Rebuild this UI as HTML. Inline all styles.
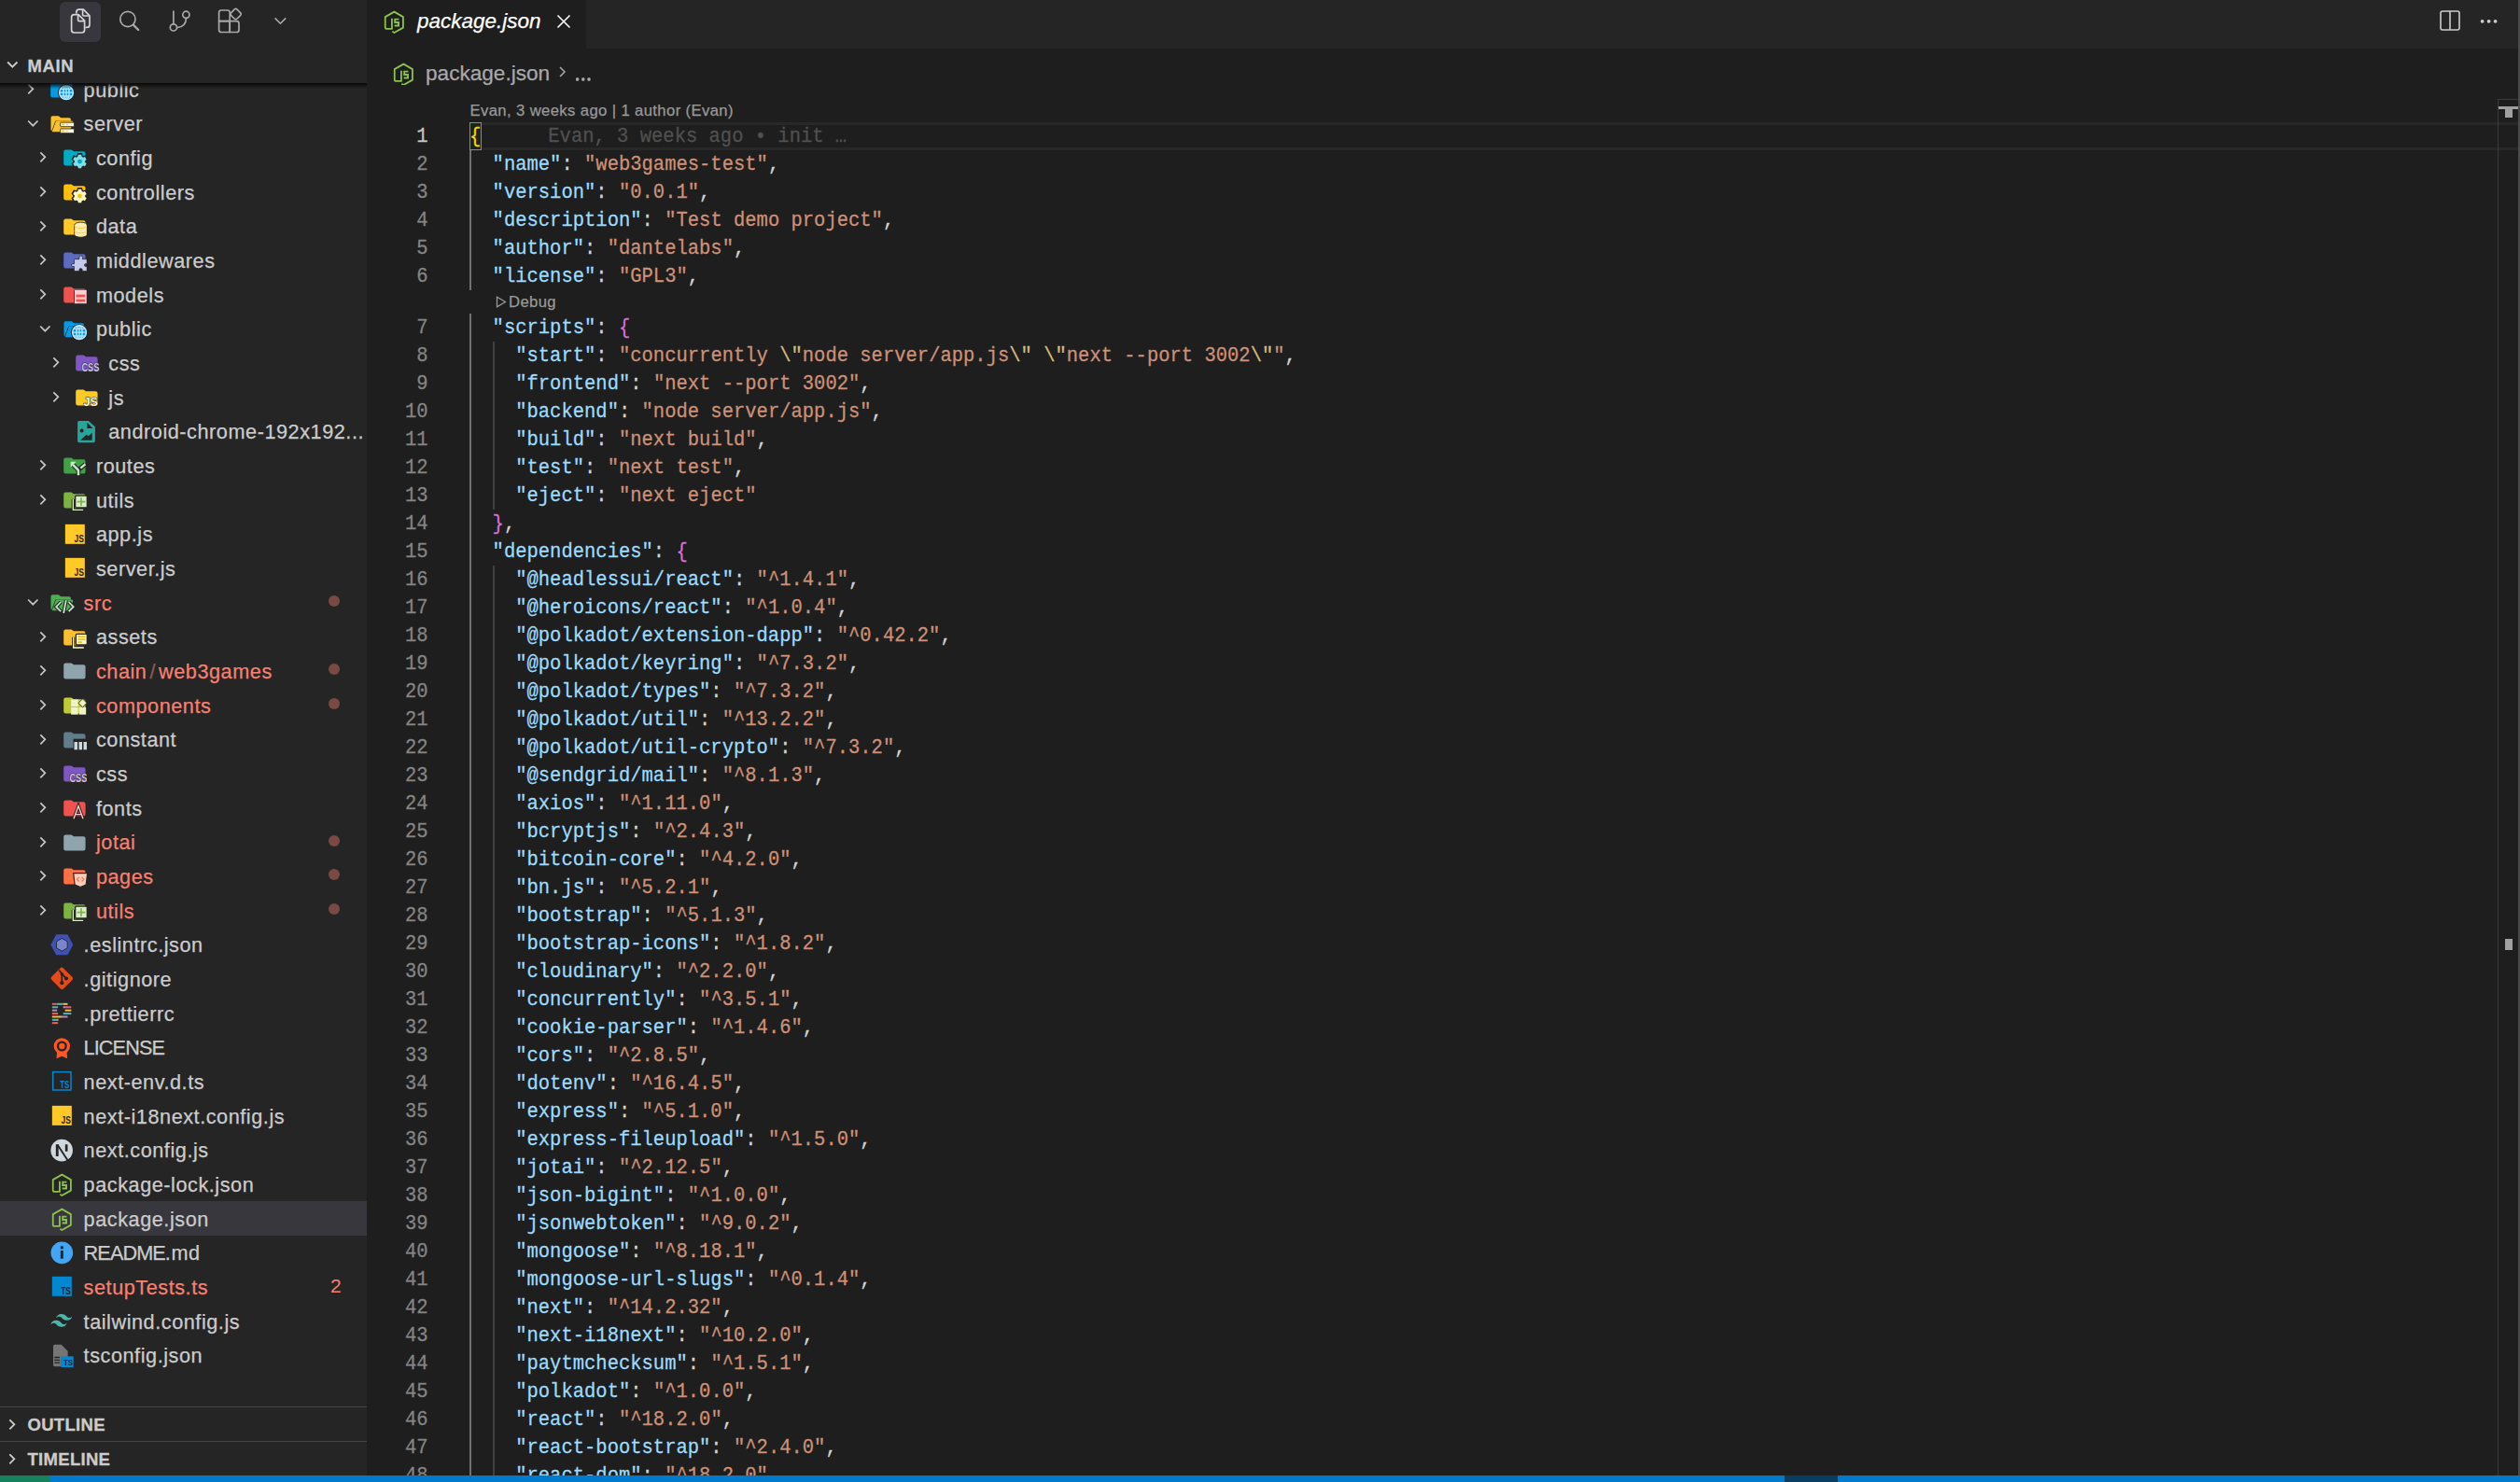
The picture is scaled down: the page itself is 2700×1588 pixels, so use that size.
<!DOCTYPE html>
<html><head><meta charset="utf-8">
<style>
*{margin:0;padding:0;box-sizing:border-box}
html,body{width:2700px;height:1588px;overflow:hidden;background:#1e1e1e;font-family:"Liberation Sans",sans-serif}
.abs{position:absolute}
#side{position:absolute;left:0;top:0;width:393px;height:1581px;background:#252526;overflow:hidden}
#act .sel{position:absolute;left:64px;top:2px;width:44px;height:43px;border-radius:6px;background:#37373d}
#act svg{position:absolute}
#hdr{position:absolute;left:0;top:52px;width:393px;height:37px}
#hdr .t{position:absolute;left:29.5px;top:-.5px;-webkit-text-stroke:.3px currentColor;line-height:37px;font-size:18.5px;font-weight:bold;color:#cccccc;letter-spacing:.6px}
#hdr svg{position:absolute;left:0;top:5px}
#tree{position:absolute;left:0;top:89px;width:393px;height:1418px;overflow:hidden}
#tree .inner{position:absolute;left:0;top:-89px;width:393px;height:1600px}
#shadow{position:absolute;left:0;top:89px;width:393px;height:6px;background:linear-gradient(#0a0a0a,rgba(0,0,0,0))}
.row{position:absolute;left:0;width:393px;height:36.67px}
.row.sel{background:#37373d}
.row .chev{position:absolute;top:5px;width:26.67px;height:26.67px}
.row .ico{position:absolute;top:5px;width:26.67px;height:26.67px}
.row svg{display:block}
.row .lbl{position:absolute;top:1.7px;line-height:36.67px;font-size:21.67px;letter-spacing:.55px;color:#cccccc;white-space:nowrap}
.row .lbl.err{color:#f88070}
.row .uc{letter-spacing:-.9px}
.row .slash{color:#8e5a52;padding:0 3px}
.row .dot{position:absolute;left:351.5px;top:11px;width:12px;height:12px;border-radius:50%;background:#794943}
.row .cnt{position:absolute;left:354px;top:0;line-height:36.67px;font-size:21px;color:#f88070}
.sect{position:absolute;left:0;width:393px;height:37px;border-top:1px solid #454545}
.sect .t{position:absolute;left:29.5px;top:1px;-webkit-text-stroke:.3px currentColor;line-height:36px;font-size:18.5px;font-weight:bold;color:#cccccc;letter-spacing:.3px}
.sect svg{position:absolute;left:0;top:5px}
#status{position:absolute;left:0;top:1581px;width:2700px;height:30px;background:#007acc}
#status .rem{position:absolute;left:0;top:0;width:53px;height:30px;background:#16825d}
#status .dk{position:absolute;left:1912px;top:0;width:57px;height:30px;background:#0a3d62}
#tabs{position:absolute;left:393px;top:0;width:2307px;height:52px;background:#252526}
#tab{position:absolute;left:0;top:0;width:235px;height:52px;background:#1e1e1e}
#tab .t{position:absolute;left:54px;top:0;line-height:46px;font-size:22.5px;font-style:italic;color:#ffffff}
#crumb .t{position:absolute;left:456px;top:60.5px;line-height:36px;font-size:22.6px;color:#a9a9a9;white-space:nowrap}
.mono{font-family:"Liberation Mono",monospace}
#code{position:absolute;left:503px;top:0;width:2170px;height:1581px;overflow:hidden}
.ln{position:absolute;left:0;height:30px;line-height:30px;transform:scaleY(1.08);transform-origin:0 12.5px;font-family:"Liberation Mono",monospace;font-size:20.5px;color:#d4d4d4;white-space:pre}
.ln,.row .lbl,.num,#tab .t,#crumb .t,.lens{-webkit-text-stroke:.25px currentColor}
.k{color:#9cdcfe}.s{color:#ce9178}.e{color:#d7ba7d}.p{color:#d4d4d4}
.b1{color:#ffd700}.b2{color:#da70d6}
.bm{outline:1px solid #888888;outline-offset:-1px;background:rgba(0,100,0,.1)}
.blame{color:#505050;padding-left:72px}
#nums{position:absolute;left:398.5px;top:0;width:60px;height:1581px;overflow:hidden}
.num{position:absolute;right:0;height:30px;line-height:30px;transform:scaleY(1.1);transform-origin:0 12px;font-family:"Liberation Mono",monospace;font-size:20.5px;color:#858585;text-align:right;width:60px}
.num.act{color:#c6c6c6}
.lens{position:absolute;left:503.5px;height:25px;line-height:25px;font-size:16.67px;letter-spacing:.38px;color:#999999;white-space:nowrap}
.guide{position:absolute;width:2px}
</style></head>
<body>
<div id="side">
  <div id="act">
    <div class="sel"></div>
    <svg style="left:0;top:0" width="393" height="52" viewBox="0 0 393 52" fill="none" stroke-linejoin="round">
      <g stroke="#d4d4d4" stroke-width="1.7">
        <path d="M81.8 14.6V13.2q0-3 3-3h4.6l6.6 6.6v9.6q0 3-3 3h-1.6"/>
        <path d="M88.6 10.2v5.4q0 1.4 1.4 1.4h5.2"/>
        <path d="M76.6 18.6q0-3 3-3h4.4l6.6 6.6v9.8q0 3-3 3h-8q-3 0-3-3z"/>
        <path d="M83.6 15.6v5.6q0 1.4 1.4 1.4h5.4"/>
      </g>
      <g stroke="#a8a8a8" stroke-width="1.7">
        <circle cx="136.9" cy="20.5" r="8.1"/>
        <path d="M142.8 26.6l5.4 5.4" stroke-width="2.4" stroke-linecap="round"/>
        <path d="M185.9 11.6v14"/>
        <circle cx="185.9" cy="29.4" r="3.6"/>
        <circle cx="199.4" cy="15.8" r="3.6"/>
        <path d="M199.4 19.4q0 9.2-9.8 10.2"/>
        <path d="M237 11h6.6q2.6 0 2.6 2.6V22.6H234.6V13.6q0-2.6 2.4-2.6z"/>
        <path d="M234.6 22.6h11.6v11.9h-9q-2.6 0-2.6-2.6z"/>
        <path d="M246.2 22.6h7.2q2.6 0 2.6 2.6v6.7q0 2.6-2.6 2.6h-7.2z"/>
        <path d="M251.1 10.2q1.5-1.5 3 0l3.4 3.4q1.5 1.5 0 3l-3.4 3.4q-1.5 1.5-3 0l-3.4-3.4q-1.5-1.5 0-3z"/>
        <path d="M294.6 19.4l5.8 5.8 5.8-5.8" stroke-width="1.6"/>
      </g>
    </svg>
  </div>
  <div id="hdr">
    <svg width="26.67" height="26.67" viewBox="0 0 16 16" style="left:0;top:3.7px"><path d="M4.9 6.3L8 9.4 11.1 6.3" fill="none" stroke="#cccccc" stroke-width="1.1"/></svg>
    <div class="t">MAIN</div>
  </div>
  <div id="tree"><div class="inner">
<div class="row" style="top:77.10px"><span class="chev" style="left:20.00px"><svg viewBox="0 0 16 16" width="26.67" height="26.67"><path d="M6.2 5L9.2 8 6.2 11" fill="none" stroke="#c5c5c5" stroke-width="1.05"/></svg></span><span class="ico" style="left:53.30px"><svg viewBox="0 0 16 16" width="26.67" height="26.67"><path fill="#039be5" d="M2 3.25H5.5Q5.9 3.25 6.2 3.55L6.9 4.15Q7.2 4.4 7.6 4.4H13.4Q14.75 4.4 14.75 5.75V12.1Q14.75 13.45 13.4 13.45H2.05Q0.72 13.45 0.72 12.1V4.6Q0.72 3.25 2 3.25Z"/><circle cx="10.8" cy="10.3" r="5.4" fill="#252526"/><circle cx="10.8" cy="10.3" r="4.5" fill="#b3e5fc" opacity=".0"/><circle cx="10.8" cy="10.3" r="4.4" fill="#039be5" stroke="#b3e5fc" stroke-width="1"/><ellipse cx="10.8" cy="10.3" rx="1.9" ry="4.4" fill="none" stroke="#b3e5fc" stroke-width=".9"/><path d="M6.4 10.3h8.8M7 8h7.6M7 12.6h7.6M10.8 5.9v8.8" stroke="#b3e5fc" stroke-width=".8"/></svg></span><span class="lbl" style="left:89.60px">public</span></div>
<div class="row" style="top:113.77px"><span class="chev" style="left:21.80px"><svg viewBox="0 0 16 16" width="26.67" height="26.67"><path d="M4.9 6.3L8 9.4 11.1 6.3" fill="none" stroke="#c5c5c5" stroke-width="1.05"/></svg></span><span class="ico" style="left:53.30px"><svg viewBox="0 0 16 16" width="26.67" height="26.67"><path fill="#fbc02d" d="M2 3.1H5.6Q6 3.1 6.3 3.4L6.9 4Q7.2 4.3 7.6 4.3H12.6Q13.8 4.3 13.8 5.5V6.2H4.6Q3.9 6.2 3.6 6.9L1.4 12.8Q1.1 12.6 0.9 12.2V4.4Q0.9 3.1 2 3.1ZM4.9 6.3H14.2Q15.4 6.3 15.1 7.4L13.3 12.6Q13 13.4 12.1 13.4H1.6L4 6.9Q4.2 6.3 4.9 6.3Z"/><rect x="7" y="7.3" width="8.9" height="2.7" rx=".4" fill="#fffde7" stroke="#252526" stroke-width=".5"/><rect x="7" y="11.4" width="8.9" height="2.8" rx=".4" fill="#fffde7" stroke="#252526" stroke-width=".5"/><path d="M8.2 8.65h1.2M11.3 8.65h.1M8.2 12.8h1.2M11.3 12.8h.1" stroke="#fbc02d" stroke-width="1" stroke-linecap="round"/></svg></span><span class="lbl" style="left:89.60px">server</span></div>
<div class="row" style="top:150.43px"><span class="chev" style="left:33.33px"><svg viewBox="0 0 16 16" width="26.67" height="26.67"><path d="M6.2 5L9.2 8 6.2 11" fill="none" stroke="#c5c5c5" stroke-width="1.05"/></svg></span><span class="ico" style="left:66.63px"><svg viewBox="0 0 16 16" width="26.67" height="26.67"><path fill="#00acc1" d="M2 3.25H5.5Q5.9 3.25 6.2 3.55L6.9 4.15Q7.2 4.4 7.6 4.4H13.4Q14.75 4.4 14.75 5.75V12.1Q14.75 13.45 13.4 13.45H2.05Q0.72 13.45 0.72 12.1V4.6Q0.72 3.25 2 3.25Z"/><path d="M9.69 7.11L9.94 5.88L12.26 5.88L12.51 7.11L13.64 7.76L14.82 7.36L15.98 9.38L15.05 10.20L15.05 11.50L15.98 12.32L14.82 14.34L13.64 13.94L12.51 14.59L12.26 15.82L9.94 15.82L9.69 14.59L8.56 13.94L7.38 14.34L6.22 12.32L7.15 11.50L7.15 10.20L6.22 9.38L7.38 7.36L8.56 7.76Z" fill="#252526" stroke="#252526" stroke-width=".9"/><path d="M9.88 7.62L10.07 6.47L12.13 6.47L12.32 7.62L13.29 8.18L14.38 7.77L15.41 9.55L14.50 10.29L14.50 11.41L15.41 12.15L14.38 13.93L13.29 13.52L12.32 14.08L12.13 15.23L10.07 15.23L9.88 14.08L8.91 13.52L7.82 13.93L6.79 12.15L7.70 11.41L7.70 10.29L6.79 9.55L7.82 7.77L8.91 8.18Z" fill="#80deea"/><circle cx="11.1" cy="10.85" r="1.45" fill="#00acc1"/></svg></span><span class="lbl" style="left:102.93px">config</span></div>
<div class="row" style="top:187.10px"><span class="chev" style="left:33.33px"><svg viewBox="0 0 16 16" width="26.67" height="26.67"><path d="M6.2 5L9.2 8 6.2 11" fill="none" stroke="#c5c5c5" stroke-width="1.05"/></svg></span><span class="ico" style="left:66.63px"><svg viewBox="0 0 16 16" width="26.67" height="26.67"><path fill="#ffc107" d="M2 3.25H5.5Q5.9 3.25 6.2 3.55L6.9 4.15Q7.2 4.4 7.6 4.4H13.4Q14.75 4.4 14.75 5.75V12.1Q14.75 13.45 13.4 13.45H2.05Q0.72 13.45 0.72 12.1V4.6Q0.72 3.25 2 3.25Z"/><path d="M9.69 7.11L9.94 5.88L12.26 5.88L12.51 7.11L13.64 7.76L14.82 7.36L15.98 9.38L15.05 10.20L15.05 11.50L15.98 12.32L14.82 14.34L13.64 13.94L12.51 14.59L12.26 15.82L9.94 15.82L9.69 14.59L8.56 13.94L7.38 14.34L6.22 12.32L7.15 11.50L7.15 10.20L6.22 9.38L7.38 7.36L8.56 7.76Z" fill="#252526" stroke="#252526" stroke-width=".9"/><path d="M9.88 7.62L10.07 6.47L12.13 6.47L12.32 7.62L13.29 8.18L14.38 7.77L15.41 9.55L14.50 10.29L14.50 11.41L15.41 12.15L14.38 13.93L13.29 13.52L12.32 14.08L12.13 15.23L10.07 15.23L9.88 14.08L8.91 13.52L7.82 13.93L6.79 12.15L7.70 11.41L7.70 10.29L6.79 9.55L7.82 7.77L8.91 8.18Z" fill="#fff9c4"/><circle cx="11.1" cy="10.85" r="1.45" fill="#ffc107"/></svg></span><span class="lbl" style="left:102.93px">controllers</span></div>
<div class="row" style="top:223.77px"><span class="chev" style="left:33.33px"><svg viewBox="0 0 16 16" width="26.67" height="26.67"><path d="M6.2 5L9.2 8 6.2 11" fill="none" stroke="#c5c5c5" stroke-width="1.05"/></svg></span><span class="ico" style="left:66.63px"><svg viewBox="0 0 16 16" width="26.67" height="26.67"><path fill="#ffca28" d="M2 3.25H5.5Q5.9 3.25 6.2 3.55L6.9 4.15Q7.2 4.4 7.6 4.4H13.4Q14.75 4.4 14.75 5.75V12.1Q14.75 13.45 13.4 13.45H2.05Q0.72 13.45 0.72 12.1V4.6Q0.72 3.25 2 3.25Z"/><path d="M7.6 7.3A4.1 1.8 0 0 1 15.8 7.3V13.33A4.1 1.8 0 0 1 7.6 13.33Z" fill="#ffecb3" stroke="#252526" stroke-width=".5"/><path d="M7.6 7.5A4.1 1.8 0 0 0 15.8 7.5M7.6 10.7A4.1 1.8 0 0 0 15.8 10.7" fill="none" stroke="#ffca28" stroke-width=".55"/></svg></span><span class="lbl" style="left:102.93px">data</span></div>
<div class="row" style="top:260.44px"><span class="chev" style="left:33.33px"><svg viewBox="0 0 16 16" width="26.67" height="26.67"><path d="M6.2 5L9.2 8 6.2 11" fill="none" stroke="#c5c5c5" stroke-width="1.05"/></svg></span><span class="ico" style="left:66.63px"><svg viewBox="0 0 16 16" width="26.67" height="26.67"><path fill="#5c6bc0" d="M2 3.25H5.5Q5.9 3.25 6.2 3.55L6.9 4.15Q7.2 4.4 7.6 4.4H13.4Q14.75 4.4 14.75 5.75V12.1Q14.75 13.45 13.4 13.45H2.05Q0.72 13.45 0.72 12.1V4.6Q0.72 3.25 2 3.25Z"/><path d="M7.97 7.6H10.76V6.35A1.05 1.05 0 0 1 12.85 6.35V7.6H15.23Q15.73 7.6 15.73 8.1V10.6H14.9A.85 .85 0 0 0 14.9 12.3H15.73V14.77Q15.73 15.27 15.23 15.27H12.7V14.55A.97 .97 0 0 0 10.76 14.55V15.27H7.97Q7.47 15.27 7.47 14.77V12.3H6.55A.85 .85 0 0 1 6.55 10.6H7.47V8.1Q7.47 7.6 7.97 7.6Z" fill="#c5cae9" stroke="#252526" stroke-width=".45"/></svg></span><span class="lbl" style="left:102.93px">middlewares</span></div>
<div class="row" style="top:297.10px"><span class="chev" style="left:33.33px"><svg viewBox="0 0 16 16" width="26.67" height="26.67"><path d="M6.2 5L9.2 8 6.2 11" fill="none" stroke="#c5c5c5" stroke-width="1.05"/></svg></span><span class="ico" style="left:66.63px"><svg viewBox="0 0 16 16" width="26.67" height="26.67"><path fill="#ef5350" d="M2 3.25H5.5Q5.9 3.25 6.2 3.55L6.9 4.15Q7.2 4.4 7.6 4.4H13.4Q14.75 4.4 14.75 5.75V12.1Q14.75 13.45 13.4 13.45H2.05Q0.72 13.45 0.72 12.1V4.6Q0.72 3.25 2 3.25Z"/><rect x="7.5" y="4.9" width="8.2" height="9.3" rx=".7" fill="#ffcdd2" stroke="#252526" stroke-width=".5"/><rect x="8.7" y="8.2" width="5.8" height="1.7" fill="#ef5350"/><rect x="8.7" y="11.2" width="5.8" height="1.6" fill="#ef5350"/></svg></span><span class="lbl" style="left:102.93px">models</span></div>
<div class="row" style="top:333.77px"><span class="chev" style="left:35.13px"><svg viewBox="0 0 16 16" width="26.67" height="26.67"><path d="M4.9 6.3L8 9.4 11.1 6.3" fill="none" stroke="#c5c5c5" stroke-width="1.05"/></svg></span><span class="ico" style="left:66.63px"><svg viewBox="0 0 16 16" width="26.67" height="26.67"><path fill="#039be5" d="M2 3.1H5.6Q6 3.1 6.3 3.4L6.9 4Q7.2 4.3 7.6 4.3H12.6Q13.8 4.3 13.8 5.5V6.2H4.6Q3.9 6.2 3.6 6.9L1.4 12.8Q1.1 12.6 0.9 12.2V4.4Q0.9 3.1 2 3.1ZM4.9 6.3H14.2Q15.4 6.3 15.1 7.4L13.3 12.6Q13 13.4 12.1 13.4H1.6L4 6.9Q4.2 6.3 4.9 6.3Z"/><circle cx="10.8" cy="10.3" r="5.4" fill="#252526"/><circle cx="10.8" cy="10.3" r="4.5" fill="#b3e5fc" opacity=".0"/><circle cx="10.8" cy="10.3" r="4.4" fill="#039be5" stroke="#b3e5fc" stroke-width="1"/><ellipse cx="10.8" cy="10.3" rx="1.9" ry="4.4" fill="none" stroke="#b3e5fc" stroke-width=".9"/><path d="M6.4 10.3h8.8M7 8h7.6M7 12.6h7.6M10.8 5.9v8.8" stroke="#b3e5fc" stroke-width=".8"/></svg></span><span class="lbl" style="left:102.93px">public</span></div>
<div class="row" style="top:370.44px"><span class="chev" style="left:46.67px"><svg viewBox="0 0 16 16" width="26.67" height="26.67"><path d="M6.2 5L9.2 8 6.2 11" fill="none" stroke="#c5c5c5" stroke-width="1.05"/></svg></span><span class="ico" style="left:79.97px"><svg viewBox="0 0 16 16" width="26.67" height="26.67"><path fill="#7e57c2" d="M2 3.25H5.5Q5.9 3.25 6.2 3.55L6.9 4.15Q7.2 4.4 7.6 4.4H13.4Q14.75 4.4 14.75 5.75V12.1Q14.75 13.45 13.4 13.45H2.05Q0.72 13.45 0.72 12.1V4.6Q0.72 3.25 2 3.25Z"/><text x="15.8" y="14.1" text-anchor="end" font-family="Liberation Sans" font-weight="bold" font-size="7.6" fill="#d1c4e9" stroke="#252526" stroke-width=".7" paint-order="stroke" textLength="11.3" lengthAdjust="spacingAndGlyphs">CSS</text></svg></span><span class="lbl" style="left:116.27px">css</span></div>
<div class="row" style="top:407.10px"><span class="chev" style="left:46.67px"><svg viewBox="0 0 16 16" width="26.67" height="26.67"><path d="M6.2 5L9.2 8 6.2 11" fill="none" stroke="#c5c5c5" stroke-width="1.05"/></svg></span><span class="ico" style="left:79.97px"><svg viewBox="0 0 16 16" width="26.67" height="26.67"><path fill="#ffca28" d="M2 3.25H5.5Q5.9 3.25 6.2 3.55L6.9 4.15Q7.2 4.4 7.6 4.4H13.4Q14.75 4.4 14.75 5.75V12.1Q14.75 13.45 13.4 13.45H2.05Q0.72 13.45 0.72 12.1V4.6Q0.72 3.25 2 3.25Z"/><text x="14.9" y="14.0" text-anchor="end" font-family="Liberation Sans" font-weight="bold" font-size="8.2" fill="#fff8e1" stroke="#252526" stroke-width=".7" paint-order="stroke" textLength="9.2" lengthAdjust="spacingAndGlyphs">JS</text></svg></span><span class="lbl" style="left:116.27px">js</span></div>
<div class="row" style="top:443.77px"><span class="ico" style="left:79.97px"><svg viewBox="0 0 16 16" width="26.67" height="26.67"><path fill="#26a69a" d="M2.9 1.24H8.94L13.14 4.94V14.1Q13.14 15.14 12.1 15.14H2.9Q1.86 15.14 1.86 14.1V2.28Q1.86 1.24 2.9 1.24Z"/><path fill="#252526" d="M8.04 2.3V6H11.64Z"/><circle cx="4.56" cy="7.5" r="1.2" fill="#252526"/><path fill="#252526" d="M3.72 13.64L7.5 10.04L8.82 10.94L11.22 8.84V13.64Z"/></svg></span><span class="lbl" style="left:116.27px">android-chrome-192x192...</span></div>
<div class="row" style="top:480.44px"><span class="chev" style="left:33.33px"><svg viewBox="0 0 16 16" width="26.67" height="26.67"><path d="M6.2 5L9.2 8 6.2 11" fill="none" stroke="#c5c5c5" stroke-width="1.05"/></svg></span><span class="ico" style="left:66.63px"><svg viewBox="0 0 16 16" width="26.67" height="26.67"><path fill="#43a047" d="M2 3.25H5.5Q5.9 3.25 6.2 3.55L6.9 4.15Q7.2 4.4 7.6 4.4H13.4Q14.75 4.4 14.75 5.75V12.1Q14.75 13.45 13.4 13.45H2.05Q0.72 13.45 0.72 12.1V4.6Q0.72 3.25 2 3.25Z"/><path d="M10.2 14.6v-2.6q0-.7-.5-1.2L6.6 7.7M10.9 10.6l3.6-3" stroke="#252526" stroke-width="2.8" fill="none"/><path d="M10.2 14.6v-2.6q0-.7-.5-1.2L6.6 7.7M11.6 10l3-2.6" stroke="#c8e6c9" stroke-width="1.5" fill="none"/><path d="M5.2 5.9h3.6L5.2 9.5z" fill="#c8e6c9"/></svg></span><span class="lbl" style="left:102.93px">routes</span></div>
<div class="row" style="top:517.10px"><span class="chev" style="left:33.33px"><svg viewBox="0 0 16 16" width="26.67" height="26.67"><path d="M6.2 5L9.2 8 6.2 11" fill="none" stroke="#c5c5c5" stroke-width="1.05"/></svg></span><span class="ico" style="left:66.63px"><svg viewBox="0 0 16 16" width="26.67" height="26.67"><path fill="#7cb342" d="M2 3.25H5.5Q5.9 3.25 6.2 3.55L6.9 4.15Q7.2 4.4 7.6 4.4H13.4Q14.75 4.4 14.75 5.75V12.1Q14.75 13.45 13.4 13.45H2.05Q0.72 13.45 0.72 12.1V4.6Q0.72 3.25 2 3.25Z"/><path d="M6.8 7.6v7h6.5" stroke="#252526" stroke-width="2" fill="none"/><path d="M6.8 7.6v7h6.5" stroke="#dcedc8" stroke-width=".8" fill="none"/><rect x="8.2" y="5.5" width="7.6" height="7.7" rx=".7" fill="#dcedc8" stroke="#252526" stroke-width=".8"/><path d="M12 6.7v5.3M9.4 9.35h5.2" stroke="#7cb342" stroke-width="1"/></svg></span><span class="lbl" style="left:102.93px">utils</span></div>
<div class="row" style="top:553.77px"><span class="ico" style="left:66.63px"><svg viewBox="0 0 16 16" width="26.67" height="26.67"><rect x="1.7" y="1.7" width="12.6" height="12.6" fill="#ffca28"/><text x="13.7" y="13.5" text-anchor="end" font-family="Liberation Sans" font-weight="bold" font-size="6.6" fill="#1e1e1e" textLength="6.2" lengthAdjust="spacingAndGlyphs">JS</text></svg></span><span class="lbl" style="left:102.93px">app.js</span></div>
<div class="row" style="top:590.44px"><span class="ico" style="left:66.63px"><svg viewBox="0 0 16 16" width="26.67" height="26.67"><rect x="1.7" y="1.7" width="12.6" height="12.6" fill="#ffca28"/><text x="13.7" y="13.5" text-anchor="end" font-family="Liberation Sans" font-weight="bold" font-size="6.6" fill="#1e1e1e" textLength="6.2" lengthAdjust="spacingAndGlyphs">JS</text></svg></span><span class="lbl" style="left:102.93px">server.js</span></div>
<div class="row" style="top:627.11px"><span class="chev" style="left:21.80px"><svg viewBox="0 0 16 16" width="26.67" height="26.67"><path d="M4.9 6.3L8 9.4 11.1 6.3" fill="none" stroke="#c5c5c5" stroke-width="1.05"/></svg></span><span class="ico" style="left:53.30px"><svg viewBox="0 0 16 16" width="26.67" height="26.67"><path fill="#4caf50" d="M2 3.1H5.6Q6 3.1 6.3 3.4L6.9 4Q7.2 4.3 7.6 4.3H12.6Q13.8 4.3 13.8 5.5V6.2H4.6Q3.9 6.2 3.6 6.9L1.4 12.8Q1.1 12.6 0.9 12.2V4.4Q0.9 3.1 2 3.1ZM4.9 6.3H14.2Q15.4 6.3 15.1 7.4L13.3 12.6Q13 13.4 12.1 13.4H1.6L4 6.9Q4.2 6.3 4.9 6.3Z"/><path d="M7.3 7.9L4.3 10.9 7.3 13.9M12.4 7.9L15.4 10.9 12.4 13.9M10.7 6.7L9.1 15" stroke="#252526" stroke-width="2.4" fill="none"/><path d="M7.3 7.9L4.3 10.9 7.3 13.9M12.4 7.9L15.4 10.9 12.4 13.9M10.7 6.7L9.1 15" stroke="#c8e6c9" stroke-width="1.05" fill="none"/></svg></span><span class="lbl err" style="left:89.60px">src</span><span class="dot"></span></div>
<div class="row" style="top:663.77px"><span class="chev" style="left:33.33px"><svg viewBox="0 0 16 16" width="26.67" height="26.67"><path d="M6.2 5L9.2 8 6.2 11" fill="none" stroke="#c5c5c5" stroke-width="1.05"/></svg></span><span class="ico" style="left:66.63px"><svg viewBox="0 0 16 16" width="26.67" height="26.67"><path fill="#fbc02d" d="M2 3.25H5.5Q5.9 3.25 6.2 3.55L6.9 4.15Q7.2 4.4 7.6 4.4H13.4Q14.75 4.4 14.75 5.75V12.1Q14.75 13.45 13.4 13.45H2.05Q0.72 13.45 0.72 12.1V4.6Q0.72 3.25 2 3.25Z"/><path d="M7 8.3v6.7h6.7" stroke="#252526" stroke-width="2" fill="none"/><path d="M7 8.3v6.7h6.7" stroke="#fff9c4" stroke-width=".8" fill="none"/><rect x="8.6" y="6.2" width="7.2" height="7" rx=".7" fill="#fff9c4" stroke="#252526" stroke-width=".8"/><path d="M9.8 7.9h4.8M9.8 9.7h4.8M9.8 11.5h2.8" stroke="#fbc02d" stroke-width="1"/></svg></span><span class="lbl" style="left:102.93px">assets</span></div>
<div class="row" style="top:700.44px"><span class="chev" style="left:33.33px"><svg viewBox="0 0 16 16" width="26.67" height="26.67"><path d="M6.2 5L9.2 8 6.2 11" fill="none" stroke="#c5c5c5" stroke-width="1.05"/></svg></span><span class="ico" style="left:66.63px"><svg viewBox="0 0 16 16" width="26.67" height="26.67"><path fill="#90a4ae" d="M2 3.25H5.5Q5.9 3.25 6.2 3.55L6.9 4.15Q7.2 4.4 7.6 4.4H13.4Q14.75 4.4 14.75 5.75V12.1Q14.75 13.45 13.4 13.45H2.05Q0.72 13.45 0.72 12.1V4.6Q0.72 3.25 2 3.25Z"/></svg></span><span class="lbl err" style="left:102.93px">chain<span class="slash">/</span>web3games</span><span class="dot"></span></div>
<div class="row" style="top:737.11px"><span class="chev" style="left:33.33px"><svg viewBox="0 0 16 16" width="26.67" height="26.67"><path d="M6.2 5L9.2 8 6.2 11" fill="none" stroke="#c5c5c5" stroke-width="1.05"/></svg></span><span class="ico" style="left:66.63px"><svg viewBox="0 0 16 16" width="26.67" height="26.67"><path fill="#c0ca33" d="M2 3.25H5.5Q5.9 3.25 6.2 3.55L6.9 4.15Q7.2 4.4 7.6 4.4H13.4Q14.75 4.4 14.75 5.75V12.1Q14.75 13.45 13.4 13.45H2.05Q0.72 13.45 0.72 12.1V4.6Q0.72 3.25 2 3.25Z"/><rect x="5.5" y="4.5" width="4.5" height="4.5" fill="#f0f4c3"/><rect x="5.5" y="9.6" width="4.5" height="4.6" fill="#f0f4c3"/><rect x="10.6" y="9.6" width="4.5" height="4.6" fill="#f0f4c3"/><path d="M12.9 4.1l2.7 2.7-2.7 2.7-2.7-2.7z" fill="#f0f4c3" stroke="#252526" stroke-width=".5"/></svg></span><span class="lbl err" style="left:102.93px">components</span><span class="dot"></span></div>
<div class="row" style="top:773.77px"><span class="chev" style="left:33.33px"><svg viewBox="0 0 16 16" width="26.67" height="26.67"><path d="M6.2 5L9.2 8 6.2 11" fill="none" stroke="#c5c5c5" stroke-width="1.05"/></svg></span><span class="ico" style="left:66.63px"><svg viewBox="0 0 16 16" width="26.67" height="26.67"><path fill="#607d8b" d="M2 3.25H5.5Q5.9 3.25 6.2 3.55L6.9 4.15Q7.2 4.4 7.6 4.4H13.4Q14.75 4.4 14.75 5.75V12.1Q14.75 13.45 13.4 13.45H2.05Q0.72 13.45 0.72 12.1V4.6Q0.72 3.25 2 3.25Z"/><rect x="6.9" y="7.6" width="9.2" height="7.6" fill="#252526"/><rect x="7.5" y="9.6" width="2.1" height="5" fill="#cfd8dc"/><rect x="10.5" y="9.6" width="2.1" height="5" fill="#cfd8dc"/><rect x="13.5" y="9.6" width="2.1" height="5" fill="#cfd8dc"/></svg></span><span class="lbl" style="left:102.93px">constant</span></div>
<div class="row" style="top:810.44px"><span class="chev" style="left:33.33px"><svg viewBox="0 0 16 16" width="26.67" height="26.67"><path d="M6.2 5L9.2 8 6.2 11" fill="none" stroke="#c5c5c5" stroke-width="1.05"/></svg></span><span class="ico" style="left:66.63px"><svg viewBox="0 0 16 16" width="26.67" height="26.67"><path fill="#7e57c2" d="M2 3.25H5.5Q5.9 3.25 6.2 3.55L6.9 4.15Q7.2 4.4 7.6 4.4H13.4Q14.75 4.4 14.75 5.75V12.1Q14.75 13.45 13.4 13.45H2.05Q0.72 13.45 0.72 12.1V4.6Q0.72 3.25 2 3.25Z"/><text x="15.8" y="14.1" text-anchor="end" font-family="Liberation Sans" font-weight="bold" font-size="7.6" fill="#d1c4e9" stroke="#252526" stroke-width=".7" paint-order="stroke" textLength="11.3" lengthAdjust="spacingAndGlyphs">CSS</text></svg></span><span class="lbl" style="left:102.93px">css</span></div>
<div class="row" style="top:847.11px"><span class="chev" style="left:33.33px"><svg viewBox="0 0 16 16" width="26.67" height="26.67"><path d="M6.2 5L9.2 8 6.2 11" fill="none" stroke="#c5c5c5" stroke-width="1.05"/></svg></span><span class="ico" style="left:66.63px"><svg viewBox="0 0 16 16" width="26.67" height="26.67"><path fill="#ef5350" d="M2 3.25H5.5Q5.9 3.25 6.2 3.55L6.9 4.15Q7.2 4.4 7.6 4.4H13.4Q14.75 4.4 14.75 5.75V12.1Q14.75 13.45 13.4 13.45H2.05Q0.72 13.45 0.72 12.1V4.6Q0.72 3.25 2 3.25Z"/><path d="M7.2 15.2l3-8.2 3 8.2M8.3 12.4h3.8" stroke="#252526" stroke-width="2" fill="none"/><path d="M7.2 15.2l3-8.2 3 8.2M8.3 12.4h3.8" stroke="#ffcdd2" stroke-width=".8" fill="none"/></svg></span><span class="lbl" style="left:102.93px">fonts</span></div>
<div class="row" style="top:883.77px"><span class="chev" style="left:33.33px"><svg viewBox="0 0 16 16" width="26.67" height="26.67"><path d="M6.2 5L9.2 8 6.2 11" fill="none" stroke="#c5c5c5" stroke-width="1.05"/></svg></span><span class="ico" style="left:66.63px"><svg viewBox="0 0 16 16" width="26.67" height="26.67"><path fill="#90a4ae" d="M2 3.25H5.5Q5.9 3.25 6.2 3.55L6.9 4.15Q7.2 4.4 7.6 4.4H13.4Q14.75 4.4 14.75 5.75V12.1Q14.75 13.45 13.4 13.45H2.05Q0.72 13.45 0.72 12.1V4.6Q0.72 3.25 2 3.25Z"/></svg></span><span class="lbl err" style="left:102.93px">jotai</span><span class="dot"></span></div>
<div class="row" style="top:920.44px"><span class="chev" style="left:33.33px"><svg viewBox="0 0 16 16" width="26.67" height="26.67"><path d="M6.2 5L9.2 8 6.2 11" fill="none" stroke="#c5c5c5" stroke-width="1.05"/></svg></span><span class="ico" style="left:66.63px"><svg viewBox="0 0 16 16" width="26.67" height="26.67"><path fill="#ff7043" d="M2 3.25H5.5Q5.9 3.25 6.2 3.55L6.9 4.15Q7.2 4.4 7.6 4.4H13.4Q14.75 4.4 14.75 5.75V12.1Q14.75 13.45 13.4 13.45H2.05Q0.72 13.45 0.72 12.1V4.6Q0.72 3.25 2 3.25Z"/><path d="M7 6.4h9l-.9 7.4-3.6 1.5-3.6-1.5z" fill="#ffccbc" stroke="#252526" stroke-width=".7"/><path d="M10.6 8.9l-1.3 1.4 1.3 1.4M12.4 8.9l1.3 1.4-1.3 1.4" stroke="#ff7043" stroke-width=".7" fill="none"/></svg></span><span class="lbl err" style="left:102.93px">pages</span><span class="dot"></span></div>
<div class="row" style="top:957.11px"><span class="chev" style="left:33.33px"><svg viewBox="0 0 16 16" width="26.67" height="26.67"><path d="M6.2 5L9.2 8 6.2 11" fill="none" stroke="#c5c5c5" stroke-width="1.05"/></svg></span><span class="ico" style="left:66.63px"><svg viewBox="0 0 16 16" width="26.67" height="26.67"><path fill="#7cb342" d="M2 3.25H5.5Q5.9 3.25 6.2 3.55L6.9 4.15Q7.2 4.4 7.6 4.4H13.4Q14.75 4.4 14.75 5.75V12.1Q14.75 13.45 13.4 13.45H2.05Q0.72 13.45 0.72 12.1V4.6Q0.72 3.25 2 3.25Z"/><path d="M6.8 7.6v7h6.5" stroke="#252526" stroke-width="2" fill="none"/><path d="M6.8 7.6v7h6.5" stroke="#dcedc8" stroke-width=".8" fill="none"/><rect x="8.2" y="5.5" width="7.6" height="7.7" rx=".7" fill="#dcedc8" stroke="#252526" stroke-width=".8"/><path d="M12 6.7v5.3M9.4 9.35h5.2" stroke="#7cb342" stroke-width="1"/></svg></span><span class="lbl err" style="left:102.93px">utils</span><span class="dot"></span></div>
<div class="row" style="top:993.78px"><span class="ico" style="left:53.30px"><svg viewBox="0 0 16 16" width="26.67" height="26.67"><path fill="#3f51b5" d="M4.4 1.4h7.2L15.2 8l-3.6 6.6H4.4L.8 8z"/><path fill="#7986cb" stroke="#1e1e1e" stroke-width=".5" d="M8 3.9l3.5 2v4.2L8 12.1l-3.5-2V5.9z"/></svg></span><span class="lbl" style="left:89.60px">.eslintrc.json</span></div>
<div class="row" style="top:1030.44px"><span class="ico" style="left:53.30px"><svg viewBox="0 0 16 16" width="26.67" height="26.67"><path fill="#e64a19" d="M8.8 1.3l5.9 5.9q.9.9 0 1.8l-5.7 5.7q-.9.9-1.8 0L1.3 8.9q-.9-.9 0-1.8l5.7-5.7q.9-.9 1.8-.1z"/><path d="M6.1 2.7l1.9 2.3v6.1M8 5.2l2.7 2.7" stroke="#252526" stroke-width="1" fill="none"/><circle cx="8" cy="10.9" r="1.25" fill="#252526"/><circle cx="10.8" cy="8.1" r="1.25" fill="#252526"/><circle cx="8" cy="5.2" r="1.05" fill="#252526"/></svg></span><span class="lbl" style="left:89.60px">.gitignore</span></div>
<div class="row" style="top:1067.11px"><span class="ico" style="left:53.30px"><svg viewBox="0 0 16 16" width="26.67" height="26.67"><g stroke-width="1.2"><path d="M1.7 2.3H4.6" stroke="#ea5e5e"/><path d="M4.6 2.3H8.8" stroke="#56b3b4"/><path d="M8.8 2.3H11.7" stroke="#f7b93e"/><path d="M1.7 4.35H5.5" stroke="#56b3b4"/><path d="M8.8 4.35H10.7" stroke="#bf85bf"/><path d="M10.7 4.35H14" stroke="#ea5e5e"/><path d="M1.7 6.4H4.9" stroke="#bf85bf"/><path d="M10 6.4H14" stroke="#f7b93e"/><path d="M1.7 8.45H5.5" stroke="#ea5e5e"/><path d="M8.8 8.45H14" stroke="#56b3b4"/><path d="M1.7 10.5H7.8" stroke="#f7b93e"/><path d="M7.8 10.5H11.7" stroke="#bf85bf"/><path d="M1.7 12.5H4.9" stroke="#56b3b4"/><path d="M4.9 12.5H5.7" stroke="#f7b93e"/><path d="M1.7 14.5H5.5" stroke="#ea5e5e"/></g></svg></span><span class="lbl" style="left:89.60px">.prettierrc</span></div>
<div class="row" style="top:1103.78px"><span class="ico" style="left:53.30px"><svg viewBox="0 0 16 16" width="26.67" height="26.67"><path fill="#ff5722" d="M4.9 10.2l-.4 5 3.5-1.6 3.5 1.6-.4-5z"/><circle cx="8" cy="7.2" r="5.2" fill="#ff5722"/><circle cx="8" cy="7.2" r="3.3" fill="#252526"/><circle cx="8" cy="7.2" r="1.9" fill="#ff5722"/></svg></span><span class="lbl" style="left:89.60px"><span class="uc">LICENSE</span></span></div>
<div class="row" style="top:1140.44px"><span class="ico" style="left:53.30px"><svg viewBox="0 0 16 16" width="26.67" height="26.67"><rect x="2.2" y="2.2" width="11.6" height="11.6" fill="none" stroke="#0288d1" stroke-width=".9"/><text x="12.8" y="12.4" text-anchor="end" font-family="Liberation Sans" font-weight="bold" font-size="6" fill="#0288d1" textLength="6" lengthAdjust="spacingAndGlyphs">TS</text></svg></span><span class="lbl" style="left:89.60px">next-env.d.ts</span></div>
<div class="row" style="top:1177.11px"><span class="ico" style="left:53.30px"><svg viewBox="0 0 16 16" width="26.67" height="26.67"><rect x="1.7" y="1.7" width="12.6" height="12.6" fill="#ffca28"/><text x="13.7" y="13.5" text-anchor="end" font-family="Liberation Sans" font-weight="bold" font-size="6.6" fill="#1e1e1e" textLength="6.2" lengthAdjust="spacingAndGlyphs">JS</text></svg></span><span class="lbl" style="left:89.60px">next-i18next.config.js</span></div>
<div class="row" style="top:1213.78px"><span class="ico" style="left:53.30px"><svg viewBox="0 0 16 16" width="26.67" height="26.67"><circle cx="7.9" cy="8.2" r="7.08" fill="#cfd8dc"/><path fill="#252526" d="M4.1 4.4H5.8V12H4.1ZM10.1 4.4H11.7V8.9H10.1Z"/><path d="M5.1 4.5L11.9 14.8" stroke="#252526" stroke-width="1.15"/></svg></span><span class="lbl" style="left:89.60px">next.config.js</span></div>
<div class="row" style="top:1250.44px"><span class="ico" style="left:53.30px"><svg viewBox="0 0 16 16" width="26.67" height="26.67"><path fill="none" stroke="#8bc34a" stroke-width="1.08" stroke-linejoin="round" d="M6.8 14.9L8.06 15.62L13.76 12.38V5.48L8.06 2.18L2.24 5.48V12.08Q2.24 13.16 3.44 13.16H6.56V6.44"/><path fill="none" stroke="#8bc34a" stroke-width="1.15" d="M11.06 6.98H8.54V9.02H10.82V11.06H8.18"/></svg></span><span class="lbl" style="left:89.60px">package-lock.json</span></div>
<div class="row sel" style="top:1287.11px"><span class="ico" style="left:53.30px"><svg viewBox="0 0 16 16" width="26.67" height="26.67"><path fill="none" stroke="#8bc34a" stroke-width="1.08" stroke-linejoin="round" d="M6.8 14.9L8.06 15.62L13.76 12.38V5.48L8.06 2.18L2.24 5.48V12.08Q2.24 13.16 3.44 13.16H6.56V6.44"/><path fill="none" stroke="#8bc34a" stroke-width="1.15" d="M11.06 6.98H8.54V9.02H10.82V11.06H8.18"/></svg></span><span class="lbl" style="left:89.60px">package.json</span></div>
<div class="row" style="top:1323.78px"><span class="ico" style="left:53.30px"><svg viewBox="0 0 16 16" width="26.67" height="26.67"><circle cx="8" cy="8" r="7.1" fill="#42a5f5"/><rect x="7.1" y="6.6" width="1.8" height="5.2" fill="#252526"/><rect x="7.1" y="3.8" width="1.8" height="1.8" fill="#252526"/></svg></span><span class="lbl" style="left:89.60px"><span class="uc">README</span>.md</span></div>
<div class="row" style="top:1360.44px"><span class="ico" style="left:53.30px"><svg viewBox="0 0 16 16" width="26.67" height="26.67"><rect x="1.7" y="1.7" width="12.6" height="12.6" fill="#0288d1"/><text x="13.7" y="13.5" text-anchor="end" font-family="Liberation Sans" font-weight="bold" font-size="6.6" fill="#1e1e1e" textLength="6.4" lengthAdjust="spacingAndGlyphs">TS</text></svg></span><span class="lbl err" style="left:89.60px">setupTests.ts</span><span class="cnt">2</span></div>
<div class="row" style="top:1397.11px"><span class="ico" style="left:53.30px"><svg viewBox="0 0 16 16" width="26.67" height="26.67"><path fill="#4db6ac" transform="translate(0.76 3.54) scale(0.258)" d="M27 0c-7.2 0-11.7 3.6-13.5 10.8 2.7-3.6 5.85-4.95 9.45-4.05 2.054.513 3.522 2.004 5.147 3.653C30.744 13.09 33.808 16.2 40.5 16.2c7.2 0 11.7-3.6 13.5-10.8-2.7 3.6-5.85 4.95-9.45 4.05-2.054-.513-3.522-2.004-5.147-3.653C36.756 3.11 33.692 0 27 0zM13.5 16.2C6.3 16.2 1.8 19.8 0 27c2.7-3.6 5.85-4.95 9.45-4.05 2.054.514 3.522 2.004 5.147 3.653C17.244 29.29 20.308 32.4 27 32.4c7.2 0 11.7-3.6 13.5-10.8-2.7 3.6-5.85 4.95-9.45 4.05-2.054-.513-3.522-2.004-5.147-3.653C23.256 19.31 20.192 16.2 13.5 16.2z"/></svg></span><span class="lbl" style="left:89.60px">tailwind.config.js</span></div>
<div class="row" style="top:1433.78px"><span class="ico" style="left:53.30px"><svg viewBox="0 0 16 16" width="26.67" height="26.67"><path fill="#757575" d="M2.4 1.1h5.2l4.2 4.2v4.5H7.6v5.3H3.4q-1 0-1-1V2.1q0-1 1-1z"/><path d="M3.2 9.3h3.4M3.2 11h3.4M3.2 12.7h3.4" stroke="#252526" stroke-width=".8"/><rect x="7.4" y="8.6" width="8" height="7.2" fill="#0288d1"/><text x="15" y="14.6" text-anchor="end" font-family="Liberation Sans" font-weight="bold" font-size="5.6" fill="#1e1e1e" textLength="6" lengthAdjust="spacingAndGlyphs">TS</text></svg></span><span class="lbl" style="left:89.60px">tsconfig.json</span></div>
  </div></div>
  <div id="shadow"></div>
  <div class="sect" style="top:1507px">
    <svg width="26.67" height="26.67" viewBox="0 0 16 16" style="left:0;top:5px"><path d="M6.2 5L9.2 8 6.2 11" fill="none" stroke="#cccccc" stroke-width="1.1"/></svg>
    <div class="t">OUTLINE</div>
  </div>
  <div class="sect" style="top:1544px">
    <svg width="26.67" height="26.67" viewBox="0 0 16 16" style="left:0;top:5px"><path d="M6.2 5L9.2 8 6.2 11" fill="none" stroke="#cccccc" stroke-width="1.1"/></svg>
    <div class="t">TIMELINE</div>
  </div>
</div>

<div id="tabs">
  <div id="tab">
    <svg style="position:absolute;left:16.07px;top:9.27px" width="26.67" height="26.67" viewBox="0 0 16 16"><path fill="none" stroke="#8bc34a" stroke-width="1.08" stroke-linejoin="round" d="M6.8 14.9L8.06 15.62L13.76 12.38V5.48L8.06 2.18L2.24 5.48V12.08Q2.24 13.16 3.44 13.16H6.56V6.44"/><path fill="none" stroke="#8bc34a" stroke-width="1.15" d="M11.06 6.98H8.54V9.02H10.82V11.06H8.18"/></svg>
    <div class="t">package.json</div>
    <svg style="position:absolute;left:203px;top:15px" width="16" height="16" viewBox="0 0 16 16"><path d="M1.5 1.5l13 13M14.5 1.5l-13 13" stroke="#ffffff" stroke-width="1.6"/></svg>
  </div>
  <!-- split -->
  <svg style="position:absolute;left:2220px;top:10px" width="24" height="24" viewBox="0 0 24 24" fill="none" stroke="#cccccc" stroke-width="1.6"><rect x="2" y="2" width="20" height="20" rx="2"/><path d="M12 2v20"/></svg>
  <svg style="position:absolute;left:2264px;top:19px" width="20" height="8" viewBox="0 0 20 8" fill="#cccccc"><circle cx="2.6" cy="3.8" r="1.9"/><circle cx="9.6" cy="3.8" r="1.9"/><circle cx="16.6" cy="3.8" r="1.9"/></svg>
</div>

<div id="crumb">
  <svg style="position:absolute;left:418.67px;top:64.6px" width="26.67" height="26.67" viewBox="0 0 16 16"><path fill="none" stroke="#8bc34a" stroke-width="1.08" stroke-linejoin="round" d="M6.8 14.9L8.06 15.62L13.76 12.38V5.48L8.06 2.18L2.24 5.48V12.08Q2.24 13.16 3.44 13.16H6.56V6.44"/><path fill="none" stroke="#8bc34a" stroke-width="1.15" d="M11.06 6.98H8.54V9.02H10.82V11.06H8.18"/></svg>
  <div class="t">package.json</div><div class="abs" style="left:617px;top:83px;width:16px;height:4px"><svg width="16" height="4" viewBox="0 0 16 4" fill="#a9a9a9" style="display:block"><rect x="0" y="0.3" width="3.2" height="3.4" rx="1"/><rect x="6.2" y="0.3" width="3.2" height="3.4" rx="1"/><rect x="12.4" y="0.3" width="3.2" height="3.4" rx="1"/></svg></div>
  <svg style="position:absolute;left:597px;top:70px" width="12" height="14" viewBox="0 0 12 14" fill="none" stroke="#a9a9a9" stroke-width="1.5"><path d="M3 2l5 5-5 5"/></svg>
</div>

<!-- line highlight -->
<div class="abs" style="left:503px;top:131px;width:2195px;height:30px;border-top:3px solid #282828;border-bottom:3px solid #282828"></div>

<div class="abs" style="left:503px;top:131px;width:12.5px;height:30px;border:1.5px solid #8a8a8a;background:#1b251b"></div>
<div class="lens" style="top:106px">Evan, 3 weeks ago | 1 author (Evan)</div>
<div class="lens" style="top:311px;left:531px"><svg width="12" height="13" viewBox="0 0 12 13" style="vertical-align:-1px;margin-right:2px"><path d="M1.5 1.2l9 5.3-9 5.3z" fill="none" stroke="#999" stroke-width="1.3"/></svg>Debug</div>

<!-- indent guides -->
<div class="guide" style="left:503px;top:161px;height:150px;background:#707070"></div>
<div class="guide" style="left:503px;top:336px;height:1245px;background:#707070"></div>
<div class="guide" style="left:528px;top:366px;height:180px;background:#404040"></div>
<div class="guide" style="left:528px;top:606px;height:975px;background:#404040"></div>

<div id="nums">
<div class="num act" style="top:131px">1</div>
<div class="num" style="top:161px">2</div>
<div class="num" style="top:191px">3</div>
<div class="num" style="top:221px">4</div>
<div class="num" style="top:251px">5</div>
<div class="num" style="top:281px">6</div>
<div class="num" style="top:336px">7</div>
<div class="num" style="top:366px">8</div>
<div class="num" style="top:396px">9</div>
<div class="num" style="top:426px">10</div>
<div class="num" style="top:456px">11</div>
<div class="num" style="top:486px">12</div>
<div class="num" style="top:516px">13</div>
<div class="num" style="top:546px">14</div>
<div class="num" style="top:576px">15</div>
<div class="num" style="top:606px">16</div>
<div class="num" style="top:636px">17</div>
<div class="num" style="top:666px">18</div>
<div class="num" style="top:696px">19</div>
<div class="num" style="top:726px">20</div>
<div class="num" style="top:756px">21</div>
<div class="num" style="top:786px">22</div>
<div class="num" style="top:816px">23</div>
<div class="num" style="top:846px">24</div>
<div class="num" style="top:876px">25</div>
<div class="num" style="top:906px">26</div>
<div class="num" style="top:936px">27</div>
<div class="num" style="top:966px">28</div>
<div class="num" style="top:996px">29</div>
<div class="num" style="top:1026px">30</div>
<div class="num" style="top:1056px">31</div>
<div class="num" style="top:1086px">32</div>
<div class="num" style="top:1116px">33</div>
<div class="num" style="top:1146px">34</div>
<div class="num" style="top:1176px">35</div>
<div class="num" style="top:1206px">36</div>
<div class="num" style="top:1236px">37</div>
<div class="num" style="top:1266px">38</div>
<div class="num" style="top:1296px">39</div>
<div class="num" style="top:1326px">40</div>
<div class="num" style="top:1356px">41</div>
<div class="num" style="top:1386px">42</div>
<div class="num" style="top:1416px">43</div>
<div class="num" style="top:1446px">44</div>
<div class="num" style="top:1476px">45</div>
<div class="num" style="top:1506px">46</div>
<div class="num" style="top:1536px">47</div>
<div class="num" style="top:1566px">48</div>
</div>
<div id="code">
<div class="ln" style="top:131px"><span class="b1">{</span><span class="blame">Evan, 3 weeks ago • init …</span></div>
<div class="ln" style="top:161px">  <span class="k">"name"</span><span class="p">:</span> <span class="s">"web3games-test"</span><span class="p">,</span></div>
<div class="ln" style="top:191px">  <span class="k">"version"</span><span class="p">:</span> <span class="s">"0.0.1"</span><span class="p">,</span></div>
<div class="ln" style="top:221px">  <span class="k">"description"</span><span class="p">:</span> <span class="s">"Test demo project"</span><span class="p">,</span></div>
<div class="ln" style="top:251px">  <span class="k">"author"</span><span class="p">:</span> <span class="s">"dantelabs"</span><span class="p">,</span></div>
<div class="ln" style="top:281px">  <span class="k">"license"</span><span class="p">:</span> <span class="s">"GPL3"</span><span class="p">,</span></div>
<div class="ln" style="top:336px">  <span class="k">"scripts"</span><span class="p">:</span> <span class="b2">{</span></div>
<div class="ln" style="top:366px">    <span class="k">"start"</span><span class="p">:</span> <span class="s">"concurrently <span class="e">\"</span>node server/app.js<span class="e">\"</span> <span class="e">\"</span>next --port 3002<span class="e">\"</span>"</span><span class="p">,</span></div>
<div class="ln" style="top:396px">    <span class="k">"frontend"</span><span class="p">:</span> <span class="s">"next --port 3002"</span><span class="p">,</span></div>
<div class="ln" style="top:426px">    <span class="k">"backend"</span><span class="p">:</span> <span class="s">"node server/app.js"</span><span class="p">,</span></div>
<div class="ln" style="top:456px">    <span class="k">"build"</span><span class="p">:</span> <span class="s">"next build"</span><span class="p">,</span></div>
<div class="ln" style="top:486px">    <span class="k">"test"</span><span class="p">:</span> <span class="s">"next test"</span><span class="p">,</span></div>
<div class="ln" style="top:516px">    <span class="k">"eject"</span><span class="p">:</span> <span class="s">"next eject"</span><span class="p"></span></div>
<div class="ln" style="top:546px">  <span class="b2">}</span><span class="p">,</span></div>
<div class="ln" style="top:576px">  <span class="k">"dependencies"</span><span class="p">:</span> <span class="b2">{</span></div>
<div class="ln" style="top:606px">    <span class="k">"@headlessui/react"</span><span class="p">:</span> <span class="s">"^1.4.1"</span><span class="p">,</span></div>
<div class="ln" style="top:636px">    <span class="k">"@heroicons/react"</span><span class="p">:</span> <span class="s">"^1.0.4"</span><span class="p">,</span></div>
<div class="ln" style="top:666px">    <span class="k">"@polkadot/extension-dapp"</span><span class="p">:</span> <span class="s">"^0.42.2"</span><span class="p">,</span></div>
<div class="ln" style="top:696px">    <span class="k">"@polkadot/keyring"</span><span class="p">:</span> <span class="s">"^7.3.2"</span><span class="p">,</span></div>
<div class="ln" style="top:726px">    <span class="k">"@polkadot/types"</span><span class="p">:</span> <span class="s">"^7.3.2"</span><span class="p">,</span></div>
<div class="ln" style="top:756px">    <span class="k">"@polkadot/util"</span><span class="p">:</span> <span class="s">"^13.2.2"</span><span class="p">,</span></div>
<div class="ln" style="top:786px">    <span class="k">"@polkadot/util-crypto"</span><span class="p">:</span> <span class="s">"^7.3.2"</span><span class="p">,</span></div>
<div class="ln" style="top:816px">    <span class="k">"@sendgrid/mail"</span><span class="p">:</span> <span class="s">"^8.1.3"</span><span class="p">,</span></div>
<div class="ln" style="top:846px">    <span class="k">"axios"</span><span class="p">:</span> <span class="s">"^1.11.0"</span><span class="p">,</span></div>
<div class="ln" style="top:876px">    <span class="k">"bcryptjs"</span><span class="p">:</span> <span class="s">"^2.4.3"</span><span class="p">,</span></div>
<div class="ln" style="top:906px">    <span class="k">"bitcoin-core"</span><span class="p">:</span> <span class="s">"^4.2.0"</span><span class="p">,</span></div>
<div class="ln" style="top:936px">    <span class="k">"bn.js"</span><span class="p">:</span> <span class="s">"^5.2.1"</span><span class="p">,</span></div>
<div class="ln" style="top:966px">    <span class="k">"bootstrap"</span><span class="p">:</span> <span class="s">"^5.1.3"</span><span class="p">,</span></div>
<div class="ln" style="top:996px">    <span class="k">"bootstrap-icons"</span><span class="p">:</span> <span class="s">"^1.8.2"</span><span class="p">,</span></div>
<div class="ln" style="top:1026px">    <span class="k">"cloudinary"</span><span class="p">:</span> <span class="s">"^2.2.0"</span><span class="p">,</span></div>
<div class="ln" style="top:1056px">    <span class="k">"concurrently"</span><span class="p">:</span> <span class="s">"^3.5.1"</span><span class="p">,</span></div>
<div class="ln" style="top:1086px">    <span class="k">"cookie-parser"</span><span class="p">:</span> <span class="s">"^1.4.6"</span><span class="p">,</span></div>
<div class="ln" style="top:1116px">    <span class="k">"cors"</span><span class="p">:</span> <span class="s">"^2.8.5"</span><span class="p">,</span></div>
<div class="ln" style="top:1146px">    <span class="k">"dotenv"</span><span class="p">:</span> <span class="s">"^16.4.5"</span><span class="p">,</span></div>
<div class="ln" style="top:1176px">    <span class="k">"express"</span><span class="p">:</span> <span class="s">"^5.1.0"</span><span class="p">,</span></div>
<div class="ln" style="top:1206px">    <span class="k">"express-fileupload"</span><span class="p">:</span> <span class="s">"^1.5.0"</span><span class="p">,</span></div>
<div class="ln" style="top:1236px">    <span class="k">"jotai"</span><span class="p">:</span> <span class="s">"^2.12.5"</span><span class="p">,</span></div>
<div class="ln" style="top:1266px">    <span class="k">"json-bigint"</span><span class="p">:</span> <span class="s">"^1.0.0"</span><span class="p">,</span></div>
<div class="ln" style="top:1296px">    <span class="k">"jsonwebtoken"</span><span class="p">:</span> <span class="s">"^9.0.2"</span><span class="p">,</span></div>
<div class="ln" style="top:1326px">    <span class="k">"mongoose"</span><span class="p">:</span> <span class="s">"^8.18.1"</span><span class="p">,</span></div>
<div class="ln" style="top:1356px">    <span class="k">"mongoose-url-slugs"</span><span class="p">:</span> <span class="s">"^0.1.4"</span><span class="p">,</span></div>
<div class="ln" style="top:1386px">    <span class="k">"next"</span><span class="p">:</span> <span class="s">"^14.2.32"</span><span class="p">,</span></div>
<div class="ln" style="top:1416px">    <span class="k">"next-i18next"</span><span class="p">:</span> <span class="s">"^10.2.0"</span><span class="p">,</span></div>
<div class="ln" style="top:1446px">    <span class="k">"paytmchecksum"</span><span class="p">:</span> <span class="s">"^1.5.1"</span><span class="p">,</span></div>
<div class="ln" style="top:1476px">    <span class="k">"polkadot"</span><span class="p">:</span> <span class="s">"^1.0.0"</span><span class="p">,</span></div>
<div class="ln" style="top:1506px">    <span class="k">"react"</span><span class="p">:</span> <span class="s">"^18.2.0"</span><span class="p">,</span></div>
<div class="ln" style="top:1536px">    <span class="k">"react-bootstrap"</span><span class="p">:</span> <span class="s">"^2.4.0"</span><span class="p">,</span></div>
<div class="ln" style="top:1566px">    <span class="k">"react-dom"</span><span class="p">:</span> <span class="s">"^18.2.0"</span><span class="p">,</span></div>
</div>

<!-- overview ruler -->
<div class="abs" style="left:2676px;top:106px;width:22px;height:1475px;border-left:1px solid #3a3a3a;border-top:1px solid #3a3a3a"></div>
<div class="abs" style="left:2677px;top:114px;width:22px;height:3px;background:#a0a0a0"></div>
<div class="abs" style="left:2684px;top:115px;width:8px;height:11px;background:#a0a0a0"></div>
<div class="abs" style="left:2684px;top:1006px;width:8px;height:12px;background:#a0a0a0"></div>
<div class="abs" style="left:2698px;top:0;width:2px;height:1581px;background:#4b4b4b"></div>

<div id="status"><div class="rem"></div><div class="dk"></div></div>
</body></html>
